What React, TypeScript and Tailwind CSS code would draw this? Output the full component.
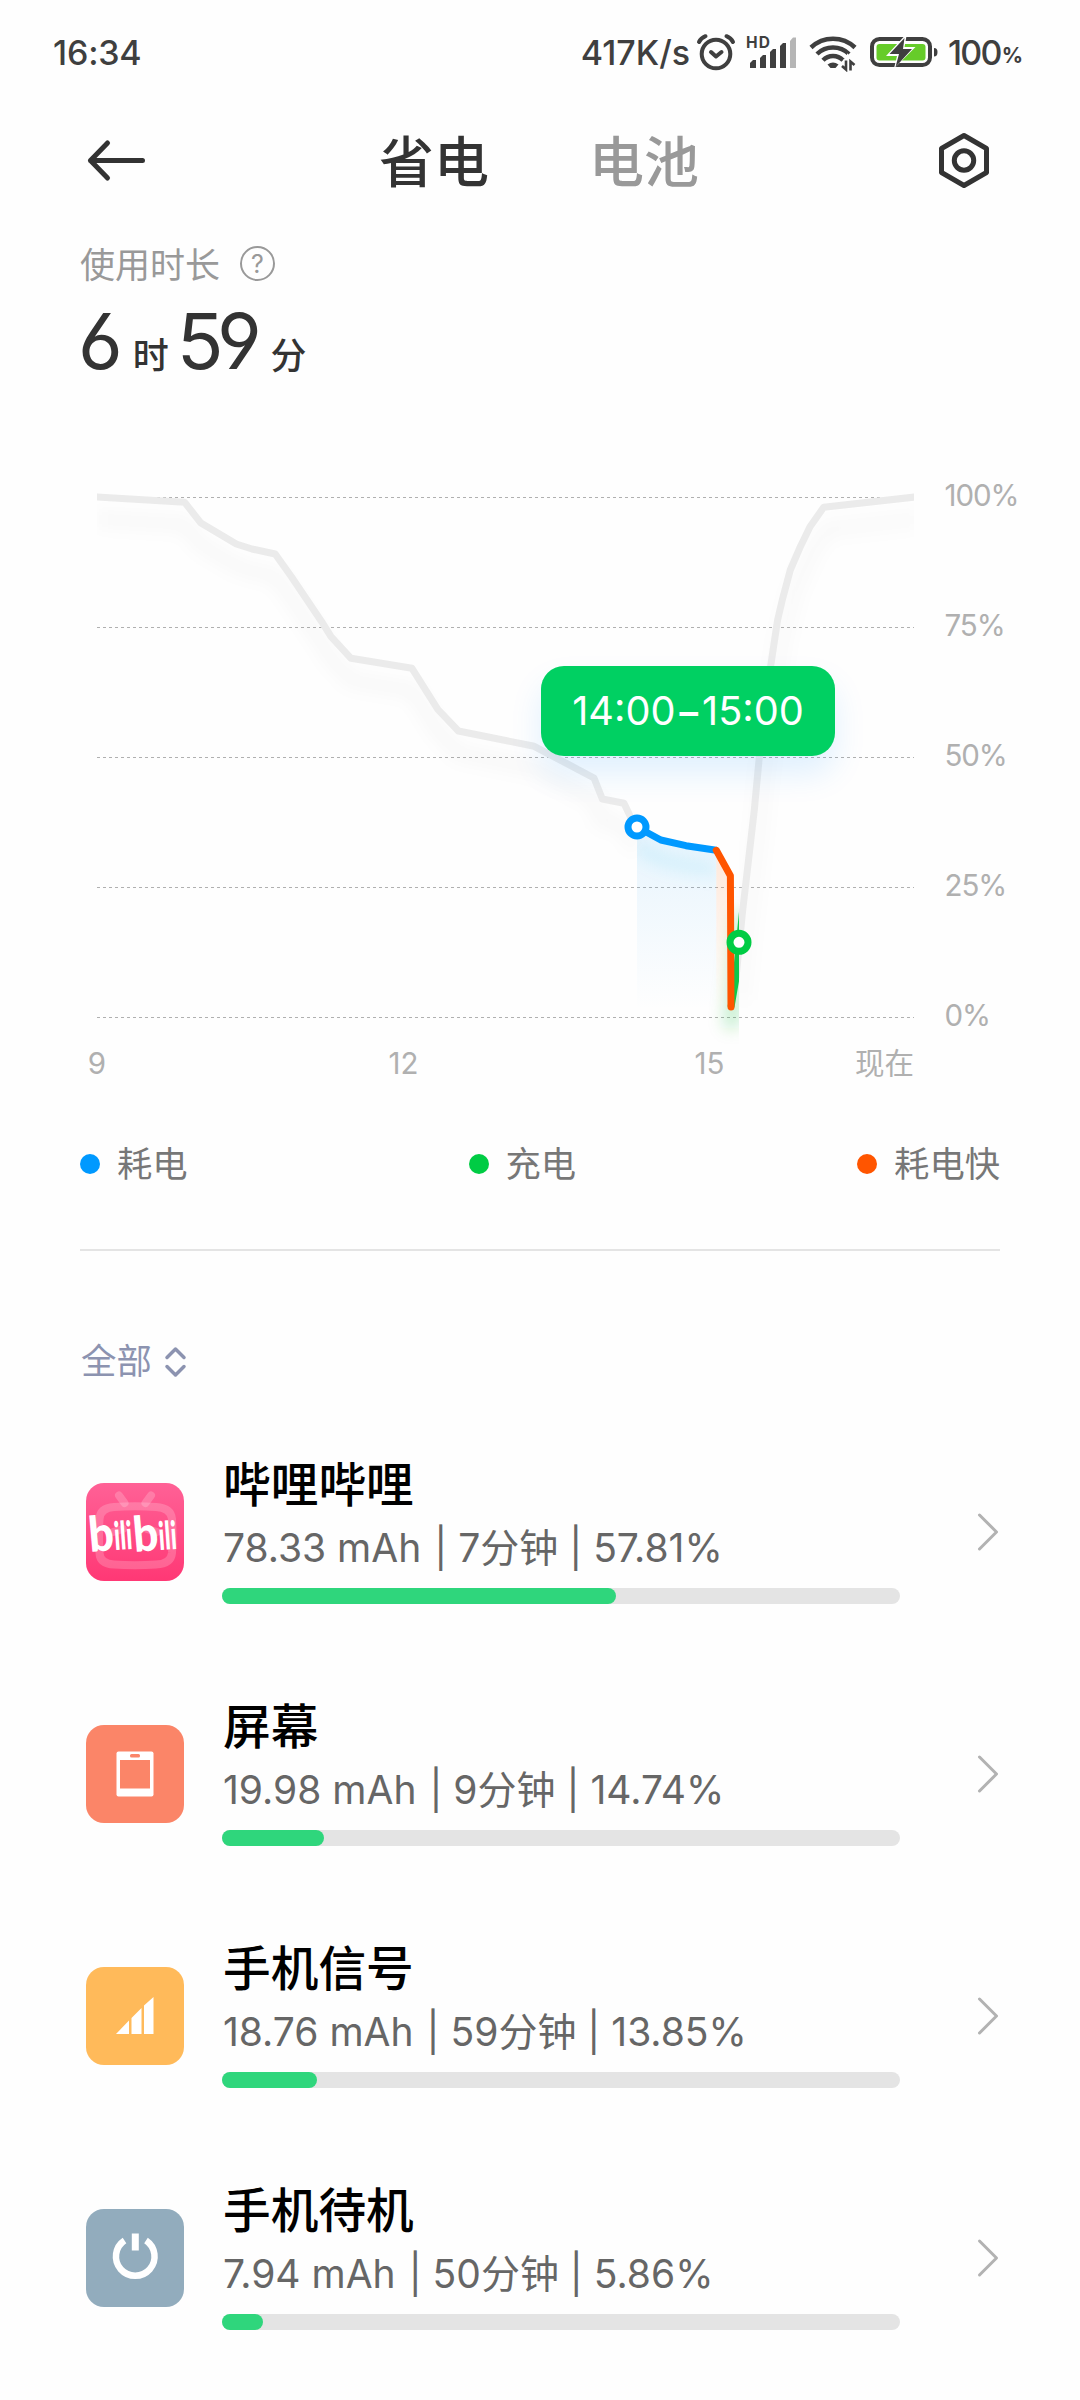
import { ReactNode } from "react"

const BilibiliIcon = () => (
  <svg className="overflow-visible" width="98" height="98" viewBox="0 0 98 98">
    <defs>
      <linearGradient id="bili" x1="0" y1="0" x2="0" y2="1">
        <stop offset="0" stopColor="#ff6196" />
        <stop offset="1" stopColor="#ff3875" />
      </linearGradient>
    </defs>
    <rect width="98" height="98" rx="18" fill="url(#bili)" />
    <g fill="none" stroke="#fff" strokeOpacity="0.2" strokeWidth="8" strokeLinecap="round">
      <path d="M33 12.500L38.500 20M65 12.500L59.500 20" />
      <path d="M28 24Q49 22.500 70 24Q85 25 86 36Q87 53 86 70Q85 81 70 81.500Q49 83 28 81.500Q14 81 13.500 70Q12.500 53 13.500 36Q14 25 28 24Z" />
      <path d="M27 49L37 46M61 46L71 49" />
    </g>
    <g fill="#fff" fontFamily="Lato, 'Open Sans', sans-serif" fontWeight="900">
      <text fontSize="49" transform="translate(4 69) rotate(-5) scale(0.9 1)">b</text>
      <text fontSize="39" transform="translate(29 67) rotate(-4) scale(0.6 1)">ili</text>
      <text fontSize="49" transform="translate(48.500 69) rotate(-5) scale(0.9 1)">b</text>
      <text fontSize="39" transform="translate(73.500 67) rotate(-4) scale(0.6 1)">ili</text>
    </g>
  </svg>
)

const ScreenIcon = () => (
  <svg width="98" height="98" viewBox="0 0 98 98">
    <rect width="98" height="98" rx="18" fill="#fb8568" />
    <rect x="30.500" y="26.500" width="37" height="45" rx="2" fill="#fff" />
    <rect x="34" y="35" width="30" height="28.500" fill="#fb8568" />
    <rect x="44" y="29" width="10" height="3.500" rx="1.500" fill="#fb8568" />
  </svg>
)

const SignalIcon = () => (
  <svg width="98" height="98" viewBox="0 0 98 98">
    <rect width="98" height="98" rx="18" fill="#ffba5a" />
    <path d="M30 67L43 53.500V67ZM45.500 51L55.500 41V67H45.500ZM58 38.500L67.500 30V67H58Z" fill="#fff" />
  </svg>
)

const StandbyIcon = () => (
  <svg width="98" height="98" viewBox="0 0 98 98">
    <rect width="98" height="98" rx="18" fill="#92acbd" />
    <path d="M38.500 31.500A19.300 19.300 0 1 0 60 31.500" fill="none" stroke="#fff" strokeWidth="6.500" />
    <path d="M49.300 24.500V41.500" stroke="#fff" strokeWidth="7" />
  </svg>
)

interface AppUsage {
  name: string
  mah: string
  time: string
  percent: string
  bar: number
  icon: ReactNode
}

const apps: AppUsage[] = [
  { name: "哔哩哔哩", mah: "78.33", time: "7", percent: "57.81", bar: 394, icon: <BilibiliIcon /> },
  { name: "屏幕", mah: "19.98", time: "9", percent: "14.74", bar: 102, icon: <ScreenIcon /> },
  { name: "手机信号", mah: "18.76", time: "59", percent: "13.85", bar: 95, icon: <SignalIcon /> },
  { name: "手机待机", mah: "7.94", time: "50", percent: "5.86", bar: 41, icon: <StandbyIcon /> },
]

const legend = [
  { label: "耗电", dot: "bg-[#0099ff]" },
  { label: "充电", dot: "bg-[#00cc44]" },
  { label: "耗电快", dot: "bg-[#ff5500]" },
]

const StatusBar = () => (
  <div className="flex h-[104px] items-center pl-[53px] pr-[57px] text-[34px] font-medium text-[#3f3f3f]">
    <span className="tracking-[-0.2px]">16:34</span>
    <span className="ml-auto">417K/s</span>
    <svg className="ml-[6px]" width="40" height="40" viewBox="0 0 40 40" fill="none" stroke="#3f3f3f" strokeWidth="4" strokeLinecap="round">
      <circle cx="20" cy="22" r="14.300" />
      <path d="M15 20L20 24.500L25.500 20" strokeLinejoin="round" />
      <path d="M3 10Q5 6 9.500 4.200M37 10Q35 6 30.500 4.200" />
    </svg>
    <svg className="ml-[10px]" width="52" height="40" viewBox="0 0 52 40">
      <text x="0" y="15.800" fontSize="15.500" fontWeight="700" fill="#3f3f3f" textLength="24">HD</text>
      <g fill="#3f3f3f">
        <path d="M4 36V31L7 28H10V36Z" />
        <path d="M14 36V26L17 23H20V36Z" />
        <path d="M24 36V20L27 17H30V36Z" />
        <path d="M34 36V14L37 11H40V36Z" />
      </g>
      <path d="M44 36V9L47 5.500H50V36Z" fill="#b5b5b5" />
    </svg>
    <svg className="ml-[11px]" width="48" height="40" viewBox="0 0 48 40" fill="none" stroke="#3f3f3f" strokeWidth="4.500">
      <path d="M2 15.500A32 32 0 0 1 46 15.500" />
      <path d="M8 22A23 23 0 0 1 40 22" />
      <path d="M14 28.300A14 14 0 0 1 34 28.300" />
      <path d="M18.500 32.500Q24 28.500 29.500 32.500L26.500 36H21.500Z" fill="#3f3f3f" stroke="none" />
      <path d="M37 27.500V37.500L32.500 33.500M41 39V28.500L45.500 33" stroke="#fefefe" strokeWidth="6" />
      <path d="M37 28.500V37.500L33 34M41.500 38.500V29.500L45.500 33" strokeWidth="2.600" />
    </svg>
    <svg className="ml-[12px]" width="70" height="40" viewBox="0 0 70 40">
      <rect x="3" y="7" width="58" height="26" rx="7.500" fill="none" stroke="#3f3f3f" strokeWidth="4" />
      <rect x="7.500" y="12" width="49" height="16.500" rx="3" fill="#66cc29" />
      <path d="M35.500 4L17 24H28L25 36.500L46.500 15H35.500L37.500 4Z" fill="#fff" />
      <path d="M35.500 6L20.500 22H30L26.500 35L43 17H34Z" fill="#3f3f3f" />
      <path d="M65 16Q68.500 16 68.500 20Q68.500 24.500 65 24.500Z" fill="#3f3f3f" />
    </svg>
    <span className="ml-[9px] tracking-[-1.8px]">100</span>
    <span className="mt-[8px] ml-[1px] text-[21px] leading-[22px] font-bold">%</span>
  </div>
)

const Header = () => (
  <div className="flex h-[114px] items-center pl-[86px] pr-[88px]">
    <svg width="62" height="50" viewBox="0 0 62 50" fill="none" stroke="#333" strokeWidth="5" strokeLinecap="round" strokeLinejoin="round">
      <path d="M56.500 24.500H4.500M21.500 7L4.500 24.500L21.500 42" />
    </svg>
    <div className="mt-[2px] ml-[231px] text-[55px] font-medium text-[#333]">省电</div>
    <div className="mt-[2px] ml-[100px] text-[55px] font-medium text-[#999]">电池</div>
    <svg className="ml-auto" width="56" height="60" viewBox="0 0 56 60" fill="none" stroke="#333" strokeWidth="5" strokeLinejoin="round">
      <path d="M28 4.500L50.500 17.500V41.500L28 54.500L5.500 41.500V17.500Z" />
      <circle cx="28" cy="29.500" r="9.700" />
    </svg>
  </div>
)

const grayLeft =
  "M96 497L184.700 502.300L200.500 522.700L236.300 544L252 549L275.200 554L291.400 576.700L321.700 621.700L331 636.700L351 658.300L412 668.300L437.800 709.300L458.400 731L534.200 746.300L594 778L602.300 799L624 803.300L631 818L637 827"
const grayRight =
  "M736 978L742.500 912L754.300 810L759.300 757L770.700 665.700L777.600 620L782.700 598.300L790.300 570L799.600 548.300L810 526.700L823.700 507.300L915 497"
const bluePath = "M637 827L660.800 840L686 845.700L716.300 850.300"
const orangePath = "M716.300 850.300L730.400 875.700L731 1007"
const greenPath = "M731 1007L736 978L742.500 912L754.300 810"

const gridLines = [
  { y: 497.5, label: "100%" },
  { y: 627.5, label: "75%" },
  { y: 757.5, label: "50%" },
  { y: 887.5, label: "25%" },
  { y: 1017.5, label: "0%" },
]

const BatteryChart = () => (
  <div className="relative mt-[89px] h-[630px]">
    <svg width="1080" height="630" viewBox="0 470 1080 630" fill="none">
      <defs>
        <linearGradient id="blueArea" gradientUnits="userSpaceOnUse" x1="0" y1="827" x2="0" y2="1010">
          <stop offset="0" stopColor="#3aa9f5" stopOpacity="0.12" />
          <stop offset="1" stopColor="#3aa9f5" stopOpacity="0" />
        </linearGradient>
        <linearGradient id="orangeArea" gradientUnits="userSpaceOnUse" x1="0" y1="850" x2="0" y2="1010">
          <stop offset="0" stopColor="#ff7722" stopOpacity="0.16" />
          <stop offset="1" stopColor="#ff7722" stopOpacity="0" />
        </linearGradient>
        <filter id="soft" filterUnits="userSpaceOnUse" x="0" y="470" width="1080" height="630">
          <feGaussianBlur stdDeviation="8" />
        </filter>
        <clipPath id="plot"><rect x="97" y="470" width="817" height="630" /></clipPath>
        <clipPath id="grayLeftClip"><rect x="97" y="470" width="540" height="630" /></clipPath>
        <clipPath id="blueClip"><rect x="637" y="820" width="79.300" height="240" /></clipPath>
        <clipPath id="greenClip"><rect x="700" y="880" width="39" height="180" /></clipPath>
        <clipPath id="grayRightClip"><rect x="739" y="470" width="175" height="630" /></clipPath>
      </defs>

      {gridLines.map((g) => (
        <g key={g.label}>
          <path d={`M97 ${g.y}H914`} stroke="#b0b0b0" strokeWidth="1" strokeDasharray="3 3" />
          <text x="944.500" y={g.y + 8.5} fontSize="29.500" letterSpacing="-1.100" fill="#b0b0b0">{g.label}</text>
        </g>
      ))}

      {/* soft shadows under the lines */}
      <g filter="url(#soft)" clipPath="url(#plot)">
        <path d={grayLeft} transform="translate(0 22)" stroke="#000" strokeOpacity="0.022" strokeWidth="16" clipPath="url(#grayLeftClip)" />
      </g>
      <g clipPath="url(#grayRightClip)">
        <path d={grayRight} transform="translate(4 22)" stroke="#000" strokeOpacity="0.02" strokeWidth="16" filter="url(#soft)" />
      </g>
      <path d="M637 827L660.800 840L686 845.700L716.300 850.300V1010H637Z" fill="url(#blueArea)" />
      <path d="M716.300 850.300L730.400 875.700V1010H716.300Z" fill="url(#orangeArea)" />
      <g clipPath="url(#blueClip)">
        <path d={bluePath} transform="translate(0 20)" stroke="#22bbee" strokeOpacity="0.1" strokeWidth="14" filter="url(#soft)" />
      </g>
      <g clipPath="url(#greenClip)">
        <path d="M731 1028L736 978L742 912" stroke="#00bb33" strokeOpacity="0.26" strokeWidth="14" filter="url(#soft)" />
      </g>

      <g strokeWidth="7" strokeLinejoin="round">
        <path d={grayLeft} stroke="#ebebeb" clipPath="url(#grayLeftClip)" />
        <path d={grayRight} stroke="#ebebeb" clipPath="url(#grayRightClip)" />
        <path d={greenPath} stroke="#0ec84b" clipPath="url(#greenClip)" />
        <path d={bluePath} stroke="#0099ff" />
        <path d={orangePath} stroke="#ff5500" strokeLinecap="round" />
      </g>
      <circle cx="637" cy="827" r="9" fill="#fff" stroke="#0099ff" strokeWidth="7" />
      <circle cx="739" cy="942.300" r="9" fill="#fff" stroke="#00cc44" strokeWidth="7" />

      <g fontSize="29.500" fill="#b0b0b0" textAnchor="middle">
        <text x="97" y="1073.500">9</text>
        <text x="403.500" y="1073.500">12</text>
        <text x="709.500" y="1073.500">15</text>
        <text x="914" y="1074" textAnchor="end">现在</text>
      </g>
    </svg>
    <div className="absolute left-[541px] top-[196px] flex h-[90px] w-[294px] items-center justify-center rounded-[23px] bg-[#00d062] pt-[2px] text-[39.700px] text-white shadow-[0_18px_32px_rgba(0,140,255,0.12)]">
      14:00<span className="font-medium">−</span>15:00
    </div>
  </div>
)

const AppRow = ({ app }: { app: AppUsage }) => (
  <div className="flex h-[242px] items-center pl-[86px] pr-[80px]">
    {app.icon}
    <div className="ml-[38px] w-[678px]">
      <div className="pl-[1px] text-[47.700px] leading-[50px] font-medium text-black">{app.name}</div>
      <div className="mt-[13px] pl-[1px] text-[39px] leading-[50px] whitespace-pre text-[#666]">
        {app.mah} mAh<span className="ml-[2px]"> | </span>{app.time}分钟<span> | </span>{app.percent}%
      </div>
      <div className="mt-[15px] h-4 rounded-full bg-[#e4e4e4]">
        <div className="h-4 rounded-full bg-[#2fd67c]" style={{ width: app.bar }} />
      </div>
    </div>
    <svg className="ml-auto" width="24" height="42" viewBox="0 0 24 42" fill="none" stroke="#b2b2b2" strokeWidth="3" strokeLinecap="round" strokeLinejoin="round">
      <path d="M3.500 4L20.500 21L3.500 38" />
    </svg>
  </div>
)

export default function App() {
  return (
    <div className="h-[2400px] w-[1080px] overflow-hidden bg-[#fefefe] font-['Inter','Noto_Sans_CJK_SC',sans-serif]">
      <StatusBar />
      <Header />

      <div className="mt-[26px] flex h-10 items-center pl-[80px] text-[35px] text-[#999]">
        <span className="mt-[2px]">使用时长</span>
        <svg className="ml-[19px]" width="38" height="38" viewBox="0 0 38 38">
          <circle cx="18.500" cy="18.500" r="16.500" fill="none" stroke="#999" strokeWidth="2" />
          <text x="18.500" y="27.500" fontSize="25" fill="#999" textAnchor="middle">?</text>
        </svg>
      </div>
      <div className="mt-[17px] flex h-20 items-baseline pl-[78px] leading-[80px] text-[#333]">
        <span className="text-[77px] [font-feature-settings:'cv03','cv04','ss01']">6</span>
        <span className="ml-[10px] text-[36px] font-medium">时</span>
        <span className="ml-[8px] text-[77px] tracking-[-6.5px] [font-feature-settings:'cv03','cv04','ss01']">59</span>
        <span className="ml-[15px] text-[36px] font-medium">分</span>
      </div>

      <BatteryChart />

      <div className="mx-[80px] mt-[40px] flex h-12 items-center justify-between text-[35.300px] text-[#777]">
        {legend.map((l) => (
          <div key={l.label} className="flex items-center">
            <span className={`mr-[17px] h-5 w-5 rounded-full ${l.dot}`} />
            <span className="mt-[3px]">{l.label}</span>
          </div>
        ))}
      </div>
      <div className="mx-[80px] mt-[61px] h-[2px] bg-[#e4e4e4]" />

      <div className="mt-[87px] flex h-12 items-center pl-[81px] text-[35.400px] text-[#8c93b0]">
        全部
        <svg className="ml-[11px]" width="26" height="34" viewBox="0 0 26 34" fill="none" stroke="#8c93b0" strokeWidth="3.500" strokeLinecap="round" strokeLinejoin="round">
          <path d="M4 12.500L12.500 4L21 12.500M4 21.500L12.500 30L21 21.500" />
        </svg>
      </div>

      <div className="mt-[25px]">
        {apps.map((app) => (
          <AppRow key={app.name} app={app} />
        ))}
      </div>
    </div>
  )
}
